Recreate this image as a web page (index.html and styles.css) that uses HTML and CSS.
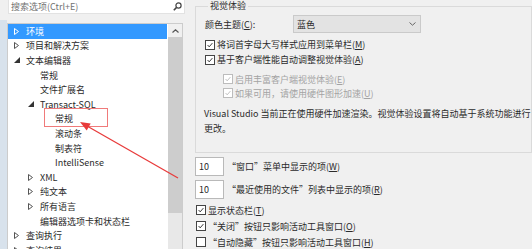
FILE: index.html
```html
<!DOCTYPE html>
<html lang="zh-CN">

<head>
    <meta charset="UTF-8">
    <title>选项</title>
    <link rel="stylesheet" href="styles.css">
</head>

<body>
    <div class="window">
        <div class="edge"></div>

        <div class="nav">
            <div class="search">
                <span class="placeholder">搜索选项(Ctrl+E)</span>
                <svg class="magnifier" width="9" height="9" viewBox="0 0 9 9">
                    <circle cx="5.5" cy="3.5" r="2.6" fill="none" stroke="#444" stroke-width="1.2"/>
                    <line x1="3.6" y1="5.4" x2="0.8" y2="8.2" stroke="#444" stroke-width="1.6"/>
                </svg>
            </div>

            <div class="tree">
                <ul class="items">
                    <li class="item lv0 selected"><span class="twist"><svg width="5" height="7" viewBox="0 0 5 7"><path d="M0.5 0.5 L4.5 3.5 L0.5 6.5 Z" fill="none" stroke="#fff"/></svg></span>环境</li>
                    <li class="item lv0"><span class="twist"><svg width="5" height="7" viewBox="0 0 5 7"><path d="M0.5 0.5 L4.5 3.5 L0.5 6.5 Z" fill="none" stroke="#555"/></svg></span>项目和解决方案</li>
                    <li class="item lv0"><span class="twist"><svg width="6" height="6" viewBox="0 0 6 6"><path d="M6 0 L6 6 L0 6 Z" fill="#333"/></svg></span>文本编辑器</li>
                    <li class="item lv1"><span class="twist"></span>常规</li>
                    <li class="item lv1"><span class="twist"></span>文件扩展名</li>
                    <li class="item lv1"><span class="twist"><svg width="6" height="6" viewBox="0 0 6 6"><path d="M6 0 L6 6 L0 6 Z" fill="#333"/></svg></span>Transact-SQL</li>
                    <li class="item lv2"><span class="twist"></span>常规</li>
                    <li class="item lv2"><span class="twist"></span>滚动条</li>
                    <li class="item lv2"><span class="twist"></span>制表符</li>
                    <li class="item lv2"><span class="twist"></span>IntelliSense</li>
                    <li class="item lv1"><span class="twist"><svg width="5" height="7" viewBox="0 0 5 7"><path d="M0.5 0.5 L4.5 3.5 L0.5 6.5 Z" fill="none" stroke="#555"/></svg></span>XML</li>
                    <li class="item lv1"><span class="twist"><svg width="5" height="7" viewBox="0 0 5 7"><path d="M0.5 0.5 L4.5 3.5 L0.5 6.5 Z" fill="none" stroke="#555"/></svg></span>纯文本</li>
                    <li class="item lv1"><span class="twist"><svg width="5" height="7" viewBox="0 0 5 7"><path d="M0.5 0.5 L4.5 3.5 L0.5 6.5 Z" fill="none" stroke="#555"/></svg></span>所有语言</li>
                    <li class="item lv1"><span class="twist"></span>编辑器选项卡和状态栏</li>
                    <li class="item lv0"><span class="twist"><svg width="5" height="7" viewBox="0 0 5 7"><path d="M0.5 0.5 L4.5 3.5 L0.5 6.5 Z" fill="none" stroke="#555"/></svg></span>查询执行</li>
                    <li class="item lv0"><span class="twist"><svg width="5" height="7" viewBox="0 0 5 7"><path d="M0.5 0.5 L4.5 3.5 L0.5 6.5 Z" fill="none" stroke="#555"/></svg></span>查询结果</li>
                </ul>
                <div class="scrollbar">
                    <div class="scroll-up">
                        <svg width="7" height="4" viewBox="0 0 7 4"><path d="M0.5 3.5 L3.5 0.8 L6.5 3.5" fill="none" stroke="#555" stroke-width="1.2"/></svg>
                    </div>
                    <div class="thumb"></div>
                </div>
            </div>
        </div>

        <div class="settings">
            <fieldset class="group">
                <legend>视觉体验</legend>

                <div class="theme-row">
                    <span class="theme-label">颜色主题(<u>C</u>):</span>
                    <div class="select">
                        <span>蓝色</span>
                        <svg width="7" height="4" viewBox="0 0 7 4"><path d="M0.5 0.5 L3.5 3.2 L6.5 0.5" fill="none" stroke="#666"/></svg>
                    </div>
                </div>

                <div class="check first"><span class="cb on"><svg viewBox="0 0 10 10"><path d="M2 5 L4 7.3 L8 2.6" fill="none" stroke="#222" stroke-width="1.1"/></svg></span>将词首字母大写样式应用到菜单栏(<u>M</u>)</div>
                <div class="check"><span class="cb on"><svg viewBox="0 0 10 10"><path d="M2 5 L4 7.3 L8 2.6" fill="none" stroke="#222" stroke-width="1.1"/></svg></span>基于客户端性能自动调整视觉体验(<u>A</u>)</div>
                <div class="check sub disabled gap"><span class="cb on"><svg viewBox="0 0 10 10"><path d="M2 5 L4 7.3 L8 2.6" fill="none" stroke="#b8b8b8" stroke-width="1.1"/></svg></span>启用丰富客户端视觉体验(<u>E</u>)</div>
                <div class="check sub disabled"><span class="cb on"><svg viewBox="0 0 10 10"><path d="M2 5 L4 7.3 L8 2.6" fill="none" stroke="#b8b8b8" stroke-width="1.1"/></svg></span>如果可用，请使用硬件图形加速(<u>U</u>)</div>

                <p class="note">Visual Studio 当前正在使用硬件加速渲染。视觉体验设置将自动基于系统功能进行<br>更改。</p>
            </fieldset>

            <div class="count-row first"><span class="num">10</span>“窗口”菜单中显示的项(<u>W</u>)</div>
            <div class="count-row"><span class="num">10</span>“最近使用的文件”列表中显示的项(<u>R</u>)</div>

            <div class="check plain first"><span class="cb on"><svg viewBox="0 0 10 10"><path d="M2 5 L4 7.3 L8 2.6" fill="none" stroke="#222" stroke-width="1.1"/></svg></span>显示状态栏(<u>T</u>)</div>
            <div class="check plain"><span class="cb on"><svg viewBox="0 0 10 10"><path d="M2 5 L4 7.3 L8 2.6" fill="none" stroke="#222" stroke-width="1.1"/></svg></span>“关闭”按钮只影响活动工具窗口(<u>O</u>)</div>
            <div class="check plain"><span class="cb"></span>“自动隐藏”按钮只影响活动工具窗口(<u>H</u>)</div>
        </div>
    </div>

    <!-- red annotation drawn over the screenshot -->
    <svg class="markup" width="532" height="249" viewBox="0 0 532 249">
        <rect x="44.5" y="108.5" width="63" height="18" fill="none" stroke="#f07a7a" stroke-width="1"/>
        <line x1="178" y1="178" x2="87" y2="126" stroke="#e83a3a" stroke-width="1.2"/>
        <path d="M80 122 L90.7 123.4 L86.7 130.4 Z" fill="#e83a3a"/>
    </svg>
</body>

</html>
```

FILE: styles.css
```css
body {
    margin: 0;
    background: #f0f0f0;
    font-family: "Noto Sans CJK SC", "Noto Sans", sans-serif;
    font-size: 9px;
    color: #2a2a2a;
    overflow: hidden;
}

.window {
    display: flex;
    height: 249px;
}

.edge {
    width: 7px;
    margin-top: 20px;
    background: #d8e2ec;
    flex-shrink: 0;
}

.nav {
    width: 176px;
    flex-shrink: 0;
    display: flex;
    flex-direction: column;
}

.search {
    height: 13px;
    margin-left: 1px;
    width: 172px;
    background: #fff;
    border: 1px solid #e2e2e2;
    border-top: none;
    display: flex;
    align-items: center;
    justify-content: space-between;
    padding: 0 1px 0 2px;
}

.placeholder {
    color: #727272;
    line-height: 13px;
}

.magnifier {
    margin-right: 1px;
}

.tree {
    margin-top: 9px;
    flex: 1;
    display: flex;
    background: #fff;
    border: 1px solid #cccccc;
    border-bottom: none;
    overflow: hidden;
}

.items {
    list-style: none;
    margin: 0;
    padding: 0;
    width: 160px;
}

.item {
    height: 14.6px;
    display: flex;
    align-items: center;
    white-space: nowrap;
}

.item.lv0 {
    padding-left: 5px;
}

.item.lv1 {
    padding-left: 19px;
}

.item.lv2 {
    padding-left: 34px;
}

.item.selected {
    background: #3399ff;
    color: #fff;
}

.twist {
    width: 13px;
    display: flex;
    align-items: center;
    padding-left: 1px;
    box-sizing: border-box;
}

.scrollbar {
    width: 14px;
    display: flex;
    flex-direction: column;
    background: #e8e8e8;
    margin-left: 1px;
}

.scroll-up {
    height: 13px;
    background: #f0f0f0;
    display: flex;
    align-items: center;
    justify-content: center;
}

.thumb {
    height: 176px;
    background: #cdcdcd;
}

.settings {
    margin-left: 12px;
    width: 334px;
}

.group {
    margin: 0;
    padding: 0 1px 16px 8px;
    border: 1px solid #dadada;
}

.group legend {
    padding: 0 2px;
    margin-left: 4px;
    line-height: 12px;
}

.theme-row {
    display: flex;
    align-items: center;
    height: 18px;
    margin-top: 3px;
}

.theme-label {
    width: 88px;
    padding-left: 1px;
}

.select {
    width: 119px;
    height: 16px;
    border: 1px solid #cacaca;
    background: #e3e3e3;
    display: flex;
    align-items: center;
    justify-content: space-between;
    padding: 0 4px 0 3px;
}

.check {
    display: flex;
    align-items: center;
    height: 15px;
    white-space: nowrap;
}

.check.first {
    margin-top: 4px;
}

.check.sub {
    height: 14px;
    padding-left: 18px;
}

.check.gap {
    margin-top: 5px;
}

.check.disabled {
    color: #a3a3a3;
}

.check.plain {
    height: 16px;
}

.settings > .check.first {
    margin-top: 3px;
}

.cb {
    width: 8px;
    height: 8px;
    border: 1px solid #444;
    background: #fff;
    margin: 0 2px 0 1px;
    display: flex;
}

.check.disabled .cb {
    border-color: #bcbcbc;
}

.cb svg {
    width: 8px;
    height: 8px;
}

.note {
    margin: 7px 0 0;
    line-height: 14.5px;
    white-space: nowrap;
}

.count-row {
    display: flex;
    align-items: center;
    height: 19px;
    margin-top: 4px;
    white-space: nowrap;
}

.count-row.first {
    margin-top: 4px;
}

.num {
    width: 24px;
    height: 17px;
    line-height: 17px;
    padding-left: 3px;
    background: #fff;
    border: 1px solid #b9b9b9;
    margin-right: 3px;
}

u {
    text-decoration-thickness: 1px;
}

.markup {
    position: absolute;
    left: 0;
    top: 0;
    pointer-events: none;
}
```
